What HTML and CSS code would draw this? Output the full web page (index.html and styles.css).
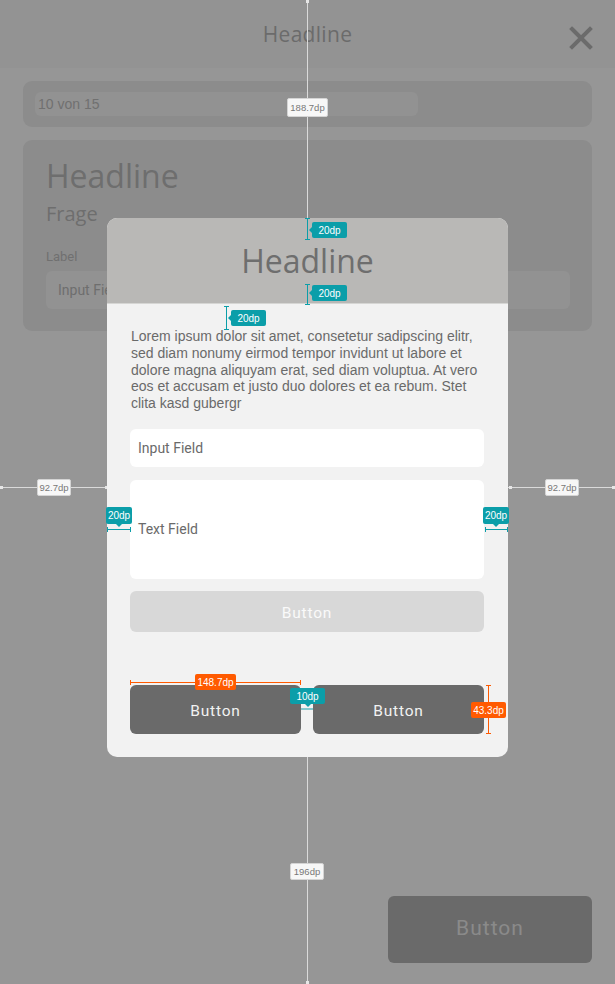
FILE: index.html
```html
<!DOCTYPE html>
<html lang="de">
<head>
<meta charset="utf-8">
<title>Dialog</title>
<link rel="stylesheet" href="styles.css">
</head>
<body>
<div class="screen">
  <header class="app-header">
    <h1 class="app-title">Headline</h1>
    <svg class="close-icon" width="24" height="24" viewBox="0 0 24 24"><path d="M3 3 L21 21 M21 3 L3 21" stroke="#6b6b6b" stroke-width="4" stroke-linecap="square" fill="none"/></svg>
  </header>
  <main class="app-content">
    <section class="card progress-card">
      <div class="progress">10 von 15</div>
    </section>
    <section class="card question-card">
      <h2 class="card-title">Headline</h2>
      <p class="card-sub">Frage</p>
      <label class="card-label">Label</label>
      <div class="card-input">Input Field</div>
    </section>
  </main>
  <button class="app-button">Button</button>

  <div class="guide guide-v"></div>
  <div class="guide guide-h"></div>
  <span class="gdot gd-top"></span>
  <span class="gdot gd-l1"></span>
  <span class="gdot gd-l2"></span>
  <span class="gdot gd-r1"></span>
  <span class="gdot gd-r2"></span>
  <span class="gdot gd-bottom"></span>
  <span class="glabel gl-top">188.7dp</span>
  <span class="glabel gl-left">92.7dp</span>
  <span class="glabel gl-right">92.7dp</span>
  <span class="glabel gl-bottom">196dp</span>

  <div class="dialog">
    <div class="dialog-head">
      <h2 class="dialog-title">Headline</h2>
    </div>
    <div class="dialog-body">
      <p class="dialog-text">Lorem ipsum dolor sit amet, consetetur sadipscing elitr, sed diam nonumy eirmod tempor invidunt ut labore et dolore magna aliquyam erat, sed diam voluptua. At vero eos et accusam et justo duo dolores et ea rebum. Stet clita kasd gubergr</p>
      <div class="field field-input">Input Field</div>
      <div class="field field-text">Text Field</div>
      <button class="btn btn-disabled">Button</button>
      <div class="btn-row">
        <button class="btn btn-dark">Button</button>
        <button class="btn btn-dark">Button</button>
      </div>
    </div>
  </div>

  <span class="mk-v teal m1"></span>
  <span class="mk-v teal m2"></span>
  <span class="mk-v teal m3"></span>
  <span class="mk-h teal m4"></span>
  <span class="mk-h teal m5"></span>
  <span class="mk-gap"></span>
  <span class="mk-h orange m7"></span>
  <span class="mk-v orange m8"></span>

  <span class="tag tag-left t1">20dp</span>
  <span class="tag tag-left t2">20dp</span>
  <span class="tag tag-left t3">20dp</span>
  <span class="tag tag-down t4">20dp</span>
  <span class="tag tag-down t5">20dp</span>
  <span class="tag tag-down t6">10dp</span>
  <span class="tag tag-orange t7">148.7dp</span>
  <span class="tag tag-orange t8">43.3dp</span>
</div>
</body>
</html>
```
FILE: styles.css
```css
* { box-sizing: border-box; }
html, body { margin: 0; padding: 0; }
body { background: #969696; font-family: "Liberation Sans", Arial, sans-serif; }

.screen {
  position: relative;
  width: 615px;
  height: 984px;
  overflow: hidden;
  background: #969696;
  display: flex;
  flex-direction: column;
}

/* background app (dimmed) */
.app-header {
  height: 68px;
  background: #939393;
  display: flex;
  align-items: center;
  justify-content: center;
  position: relative;
}
.app-title {
  margin: 0;
  font-family: "Open Sans", sans-serif;
  font-weight: 400;
  font-size: 21px;
  color: #6b6b6b;
  letter-spacing: 0.3px;
}
.close-icon { position: absolute; left: 569px; top: 26px; }

.app-content { padding: 13px 23px 0; display: flex; flex-direction: column; gap: 13px; }
.card { background: #8c8c8c; border-radius: 9px; }
.progress-card { height: 46px; padding: 11px 12px; }
.progress {
  width: 383px; height: 24px; border-radius: 6px; background: #929292;
  font-family: "Liberation Sans", sans-serif; font-size: 14px; color: #707070;
  line-height: 24px; padding-left: 3px;
}
.question-card { height: 191px; padding: 16px 22px 22px 23px; display: flex; flex-direction: column; }
.card-title { margin: 0; font-family: "Open Sans", sans-serif; font-weight: 400; font-size: 32px; line-height: 40px; color: #6e6e6e; }
.card-sub { margin: 6px 0 0; font-family: "Open Sans", sans-serif; font-size: 20px; line-height: 24px; color: #6e6e6e; }
.card-label { margin-top: 23px; font-family: "Roboto", sans-serif; font-size: 13px; line-height: 16px; color: #707070; }
.card-input { margin-top: 6px; height: 38px; border-radius: 6px; background: #929292; font-family: "Roboto", sans-serif; font-size: 14px; line-height: 38px; padding-left: 12px; color: #6e6e6e; }

.app-button {
  margin: auto 23px 21px auto;
  width: 204px; height: 67px;
  border: 0; border-radius: 6px; padding: 0 0 3px;
  background: #6a6a6a; color: #8a8a8a;
  font-family: "Roboto", sans-serif; font-size: 21px; letter-spacing: 1px;
}

/* guides */
.guide { position: absolute; background: #dadada; }
.guide-v { left: 307px; top: 0; width: 1px; height: 984px; }
.guide-h { left: 0; top: 487px; width: 615px; height: 1px; }
.gdot { position: absolute; width: 3px; height: 3px; background: #e6e6e6; }
.gd-top { left: 306px; top: 0; }
.gd-bottom { left: 306px; top: 981px; }
.gd-l1 { left: 0; top: 486px; }
.gd-l2 { left: 105px; top: 486px; }
.gd-r1 { left: 509px; top: 486px; }
.gd-r2 { left: 612px; top: 486px; }
.glabel {
  position: absolute; background: #f7f7f7; border: 1px solid #d4d4d4; border-radius: 2px;
  font-family: "Liberation Sans", sans-serif; font-size: 9.5px; color: #777;
  display: flex; align-items: center; justify-content: center;
}
.gl-top { left: 287px; top: 98px; width: 41px; height: 19px; }
.gl-left { left: 37px; top: 479px; width: 34px; height: 17px; }
.gl-right { left: 545px; top: 479px; width: 34px; height: 17px; }
.gl-bottom { left: 290px; top: 863px; width: 34px; height: 17px; }

/* dialog */
.dialog {
  position: absolute; left: 107px; top: 218px; width: 401px;
  border-radius: 10px; overflow: hidden; background: #f2f2f2;
}
.dialog-head { height: 86px; background: #b9b8b6; display: flex; align-items: center; justify-content: center; border-bottom: 1px solid #d6d6d4; }
.dialog-title { margin: 0; font-family: "Open Sans", sans-serif; font-weight: 400; font-size: 32px; line-height: 46px; color: #6e6e6e; }
.dialog-body { padding: 20px 24px 23px 23px; display: flex; flex-direction: column; }
.dialog-text { margin: 4px 0 0 1px; font-family: "Liberation Sans", Arial, sans-serif; font-size: 14px; line-height: 16.8px; color: #6a6a6a; }
.field {
  background: #fff; border-radius: 6px; padding-left: 8px;
  font-family: "Roboto", sans-serif; font-size: 14px; color: #6a6a6a;
  display: flex; align-items: center;
}
.field-input { margin-top: 17px; height: 38px; }
.field-text { margin-top: 13px; height: 99px; }
.btn { border: 0; border-radius: 6px; padding: 3px 0 0; font-family: "Roboto", sans-serif; font-size: 15.5px; letter-spacing: 0.8px; }
.btn-disabled { margin-top: 12px; height: 41px; background: #d8d8d8; color: #fafafa; }
.btn-row { margin-top: 53px; display: flex; gap: 12px; }
.btn-dark { flex: 1; height: 49px; background: #6a6a6a; color: #f2f2f2; }

/* markers */
.mk-v, .mk-h { position: absolute; }
.mk-v { width: 1px; }
.mk-h { height: 1px; }
.teal { background: #0b9ea9; }
.orange { background: #ff5a00; }
.mk-v::before, .mk-v::after { content: ""; position: absolute; left: -2px; width: 5px; height: 1px; background: inherit; }
.mk-v::before { top: 0; }
.mk-v::after { bottom: 0; }
.mk-h::before, .mk-h::after { content: ""; position: absolute; top: -2px; width: 1px; height: 5px; background: inherit; }
.mk-h::before { left: 0; }
.mk-h::after { right: 0; }
.m1 { left: 307px; top: 218px; height: 22px; }
.m2 { left: 307px; top: 284px; height: 21px; }
.m3 { left: 226px; top: 306px; height: 24px; }
.m4 { left: 107px; top: 529px; width: 24px; }
.m5 { left: 485px; top: 529px; width: 23px; }
.mk-gap { position: absolute; left: 301px; top: 708px; width: 12px; height: 2px; background: #84c8cd; }
.m7 { left: 130px; top: 682px; width: 171px; }
.m8 { left: 488px; top: 685px; height: 49px; }

.tag {
  position: absolute; height: 16px; border-radius: 2px;
  background: #0b9ea9; color: #fff;
  font-family: "Liberation Sans", sans-serif; font-size: 10px;
  display: flex; align-items: center; justify-content: center;
}
.tag-left::before {
  content: ""; position: absolute; left: -3px; top: 5px;
  border-top: 3px solid transparent; border-bottom: 3px solid transparent; border-right: 3px solid #0b9ea9;
}
.tag-down::after {
  content: ""; position: absolute; left: 50%; margin-left: -3px; bottom: -3px;
  border-left: 3px solid transparent; border-right: 3px solid transparent; border-top: 3px solid #0b9ea9;
}
.tag-orange { background: #ff5a00; }
.t1 { left: 312px; top: 222px; width: 35px; }
.t2 { left: 312px; top: 285px; width: 35px; }
.t3 { left: 231px; top: 310px; width: 35px; }
.t4 { left: 106px; top: 507px; width: 26px; height: 17px; }
.t5 { left: 483px; top: 507px; width: 26px; height: 17px; }
.t6 { left: 290px; top: 688px; width: 35px; }
.t7 { left: 195px; top: 674px; width: 41px; }
.t8 { left: 471px; top: 702px; width: 35px; }
```
